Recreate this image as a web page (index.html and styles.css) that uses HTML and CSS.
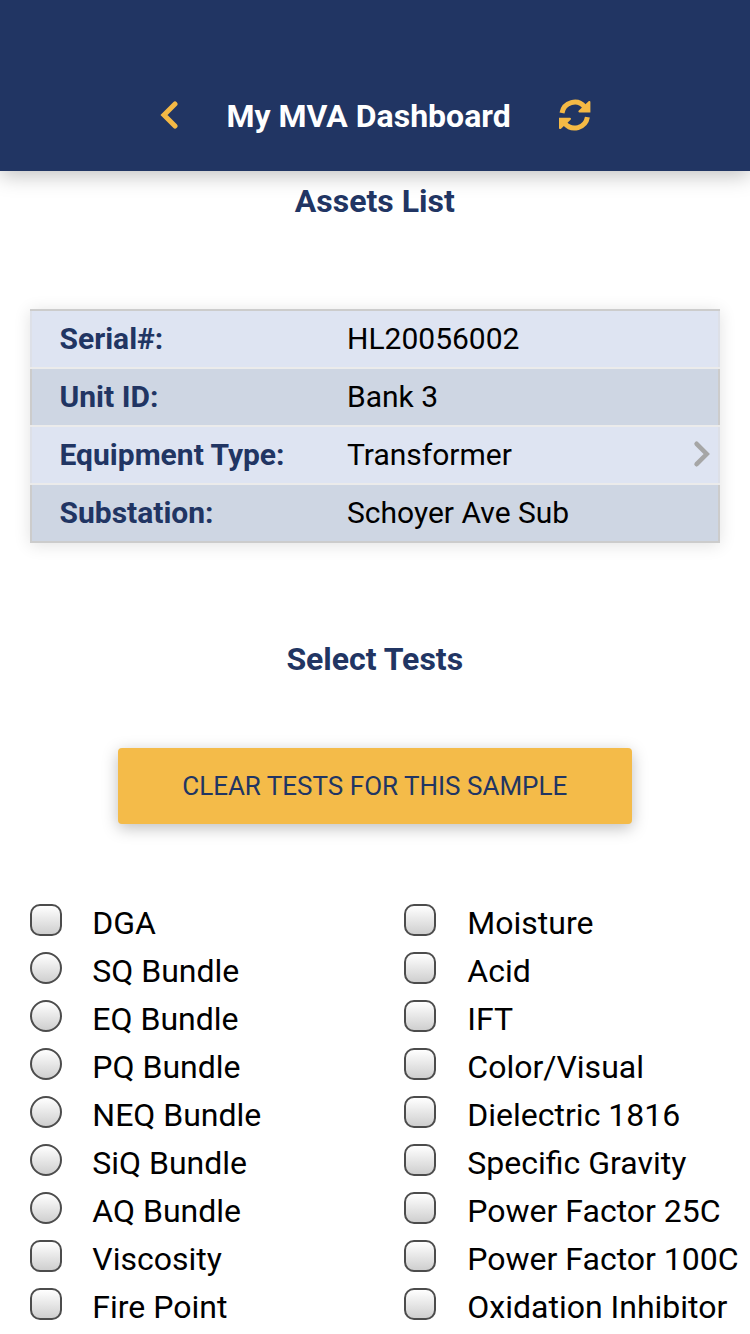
FILE: index.html
```html
<!DOCTYPE html>
<html lang="en"><head><meta charset="utf-8"><title>My MVA Dashboard</title><link rel="stylesheet" href="styles.css"></head>
<body>
<header class="bar">
<svg class="back" viewBox="0 0 18 28"><path d="M15 3 4 14l11 11" fill="none" stroke="currentColor" stroke-width="5" stroke-linecap="round"/></svg>
<h1 class="title">My MVA Dashboard</h1>
<svg class="sync" viewBox="0 0 32 32" fill="none" stroke="currentColor" stroke-width="5"><path d="M3 14A12.9 12.9 0 0 1 25.6 7.8M28.4 18.2A12.9 12.9 0 0 1 5.8 24.4"/><path class="tip" d="M31.4 3.2v10.2H20.6c-1.3 0-1.6-1.2-.8-2l9.6-8.9c.8-.7 2-.4 2 .7ZM0 29v-10.2h10.8c1.3 0 1.6 1.2.8 2L2 29.7c-.8.7-2 .4-2-.7Z"/></svg>
</header>
<main>
<h2 class="heading">Assets List</h2>
<section class="asset">
<div class="row"><b>Serial#:</b><span>HL20056002</span></div>
<div class="row"><b>Unit ID:</b><span>Bank 3</span></div>
<div class="row"><b>Equipment Type:</b><span>Transformer</span><svg class="chevron" viewBox="0 0 18 28"><path d="m3.6 3.8 10.1 10.2L3.6 24.2" fill="none" stroke="currentColor" stroke-width="4.6" stroke-linecap="round"/></svg></div>
<div class="row"><b>Substation:</b><span>Schoyer Ave Sub</span></div>
</section>
<h2 class="heading tests-heading">Select Tests</h2>
<button class="clear">CLEAR TESTS FOR THIS SAMPLE</button>
<section class="tests">
<div class="column first">
<label class="test"><i class="box"></i>DGA</label>
<label class="test"><i class="box radio"></i>SQ Bundle</label>
<label class="test"><i class="box radio"></i>EQ Bundle</label>
<label class="test"><i class="box radio"></i>PQ Bundle</label>
<label class="test"><i class="box radio"></i>NEQ Bundle</label>
<label class="test"><i class="box radio"></i>SiQ Bundle</label>
<label class="test"><i class="box radio"></i>AQ Bundle</label>
<label class="test"><i class="box"></i>Viscosity</label>
<label class="test"><i class="box"></i>Fire Point</label>
</div>
<div class="column">
<label class="test"><i class="box"></i>Moisture</label>
<label class="test"><i class="box"></i>Acid</label>
<label class="test"><i class="box"></i>IFT</label>
<label class="test"><i class="box"></i>Color/Visual</label>
<label class="test"><i class="box"></i>Dielectric 1816</label>
<label class="test"><i class="box"></i>Specific Gravity</label>
<label class="test"><i class="box"></i>Power Factor 25C</label>
<label class="test"><i class="box"></i>Power Factor 100C</label>
<label class="test"><i class="box"></i>Oxidation Inhibitor</label>
</div>
</section>
</main>
</body></html>
```
FILE: styles.css
```css
* { box-sizing: border-box; }
body { margin: 0; height: 1334px; overflow: hidden; background: #fff; color: #000; font-family: Roboto, sans-serif; }
.bar { height: 171px; padding: 96px 0 0 160px; display: flex; align-items: flex-start; background: #213563; box-shadow: 0 4px 20px rgba(0,0,0,.26); }
.back { width: 18px; height: 28px; margin-top: 5px; color: #f4b945; }
.title { width: 284px; margin: 0 48px 0 48.5px; font-size: 32px; line-height: 40px; font-weight: 700; color: #fff; white-space: nowrap; }
.sync { width: 32px; height: 32px; margin-top: 3px; color: #f4b945; }
.tip { fill: currentColor; stroke: none; }
.heading { margin: 10px .5px 0 0; font-size: 32px; line-height: 40px; font-weight: 700; text-align: center; color: #213563; }
.asset { margin: 88px 30px 0; border-top: 2px solid #ccc; box-shadow: 0 2px 16px rgba(0,0,0,.12); }
.row { height: 58px; padding: 0 7px 2px 27.5px; display: flex; align-items: center; font-size: 30px; border: solid #ccc; border-width: 0 2px; }
.row:nth-child(odd) { border-image: linear-gradient(#dde0e8 56px, #ebebeb 56px) 0 2; background: linear-gradient(#dee4f2 56px, #ebebeb 56px); }
.row:nth-child(2) { border-image: linear-gradient(#ccc 56px, #ebebeb 56px) 0 2; background: linear-gradient(#ced6e3 56px, #ebebeb 56px); }
.row:last-child { background: #ced6e3; box-shadow: inset 0 -2px #ccc; }
.row b, .row span { margin-top: -2px; }
.row b { width: 287.5px; color: #213563; }
.chevron { width: 18px; height: 28px; margin: -2px 0 0 auto; color: #a6a6a6; }
.tests-heading { margin-top: 96px; }
.clear { display: block; width: 514px; height: 76px; margin: 69px auto 0; padding: 0 .5px 0 0; border: 0; border-radius: 4px; background: #f4bb49; color: #213563; font: 400 26px Roboto, sans-serif; box-shadow: 0 4px 16px rgba(0,0,0,.26); }
.tests { display: grid; grid-template-columns: 374px 346px; margin: 75px 0 0 30px; }
.test { display: flex; height: 48px; font-size: 32px; line-height: 48px; white-space: nowrap; }
.box { width: 32px; height: 32px; margin: 5px 31.3px 0 0; border: 2px solid #4c4c4c; border-radius: 10px; background: linear-gradient(#fff, #cfcfcf); }
.first .box { margin-right: 30.3px; }
.radio { border-radius: 50%; }
```
